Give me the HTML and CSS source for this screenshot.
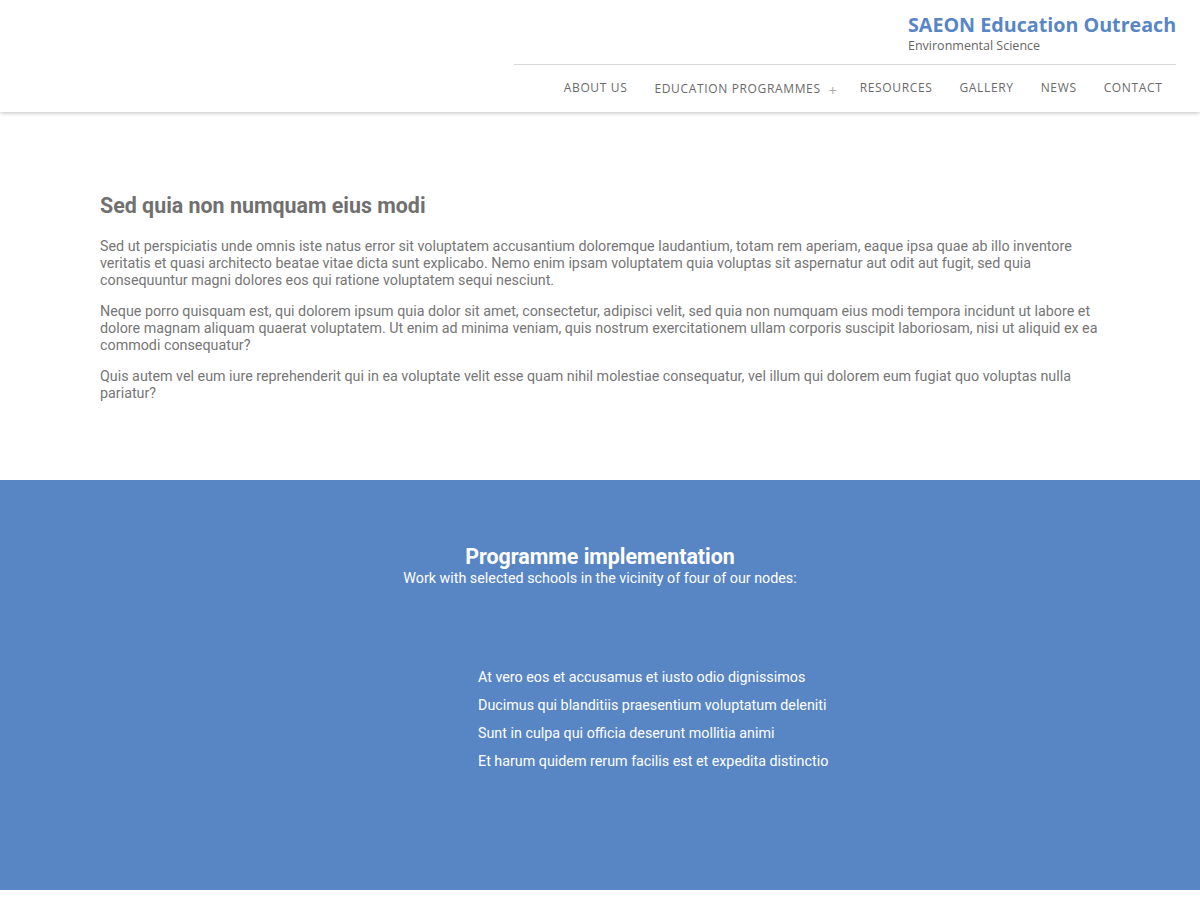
FILE: index.html
```html
<!DOCTYPE html>
<html lang="en">
<head>
<meta charset="utf-8">
<title>SAEON Education Outreach</title>
<link rel="stylesheet" href="styles.css">
</head>
<body>
<header class="site-header">
  <div class="header-inner">
    <div class="brand">
      <div class="brand-title">SAEON Education Outreach</div>
      <div class="brand-sub">Environmental Science</div>
    </div>
    <nav class="main-nav">
      <a href="#">About us</a>
      <a href="#" class="has-sub">Education Programmes<span class="plus">+</span></a>
      <a href="#">Resources</a>
      <a href="#">Gallery</a>
      <a href="#">News</a>
      <a href="#">Contact</a>
    </nav>
  </div>
</header>
<main>
  <section class="intro">
    <h2>Sed quia non numquam eius modi</h2>
    <p>Sed ut perspiciatis unde omnis iste natus error sit voluptatem accusantium doloremque laudantium, totam rem aperiam, eaque ipsa quae ab illo inventore veritatis et quasi architecto beatae vitae dicta sunt explicabo. Nemo enim ipsam voluptatem quia voluptas sit aspernatur aut odit aut fugit, sed quia consequuntur magni dolores eos qui ratione voluptatem sequi nesciunt.</p>
    <p>Neque porro quisquam est, qui dolorem ipsum quia dolor sit amet, consectetur, adipisci velit, sed quia non numquam eius modi tempora incidunt ut labore et dolore magnam aliquam quaerat voluptatem. Ut enim ad minima veniam, quis nostrum exercitationem ullam corporis suscipit laboriosam, nisi ut aliquid ex ea commodi consequatur?</p>
    <p>Quis autem vel eum iure reprehenderit qui in ea voluptate velit esse quam nihil molestiae consequatur, vel illum qui dolorem eum fugiat quo voluptas nulla pariatur?</p>
  </section>
  <section class="programme">
    <h2>Programme implementation</h2>
    <p class="lead">Work with selected schools in the vicinity of four of our nodes:</p>
    <ul class="nodes">
      <li>At vero eos et accusamus et iusto odio dignissimos</li>
      <li>Ducimus qui blanditiis praesentium voluptatum deleniti</li>
      <li>Sunt in culpa qui officia deserunt mollitia animi</li>
      <li>Et harum quidem rerum facilis est et expedita distinctio</li>
    </ul>
  </section>
</main>
</body>
</html>
```
FILE: styles.css
```css
* { box-sizing: border-box; }
html, body { margin: 0; padding: 0; background: #fff; }
body { font-family: Roboto, "Liberation Sans", sans-serif; }

.site-header {
  height: 112px;
  background: #fff;
  box-shadow: 0 1px 4px rgba(0,0,0,0.25);
  position: relative;
  z-index: 2;
}
.header-inner {
  margin-left: 514px;
  margin-right: 24px;
  display: flex;
  flex-direction: column;
  align-items: flex-end;
}
.brand {
  width: 268px;
  padding-top: 12px;
  height: 64px;
}
.brand-title {
  font-family: "Open Sans", sans-serif;
  font-weight: 700;
  font-size: 19.7px;
  line-height: 26px;
  color: #5886c5;
  white-space: nowrap;
}
.brand-sub {
  font-family: "Open Sans", sans-serif;
  font-size: 12.5px;
  line-height: 16px;
  color: #666;
}
.main-nav {
  width: 100%;
  border-top: 1px solid #d8d8d8;
  display: flex;
  justify-content: flex-end;
  padding-top: 14px;
}
.main-nav a {
  font-family: "Open Sans", sans-serif;
  font-size: 12px;
  line-height: 17px;
  letter-spacing: 0.65px;
  text-transform: uppercase;
  color: #6a6a6a;
  text-decoration: none;
  padding: 0 13.5px;
  white-space: nowrap;
}
.main-nav .plus {
  color: #aaa;
  font-size: 14px;
  margin-left: 8px;
  margin-right: -4px;
  position: relative;
  top: 3px;
  letter-spacing: 0;
}

.intro {
  padding: 82px 100px 78px;
  color: #767676;
}
.intro h2 {
  margin: 0 0 20px;
  font-size: 21.4px;
  line-height: 24px;
  font-weight: 700;
  color: #707070;
}
.intro p {
  margin: 0 0 14px;
  font-size: 14.3px;
  line-height: 17px;
}
.intro p:last-child { margin-bottom: 0; }

.programme {
  background: #5886c5;
  height: 410px;
  color: #fff;
  padding-top: 64px;
}
.programme h2 {
  margin: 0;
  text-align: center;
  font-size: 21.4px;
  line-height: 26px;
  font-weight: 700;
}
.programme .lead {
  margin: 0;
  text-align: center;
  font-size: 14.3px;
  line-height: 17px;
}
.nodes {
  list-style: none;
  margin: 82px 0 0 478px;
  padding: 0;
}
.nodes li {
  font-size: 14.3px;
  line-height: 17px;
  margin-bottom: 11px;
}
```
